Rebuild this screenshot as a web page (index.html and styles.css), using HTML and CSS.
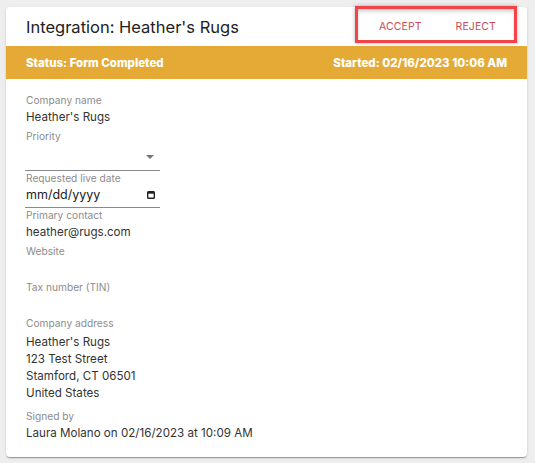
FILE: index.html
```html
<!DOCTYPE html>
<html lang="en">
<head>
    <meta charset="UTF-8">
    <meta name="viewport" content="width=device-width, initial-scale=1.0">
    <title>Integration: Heather's Rugs</title>
    <link rel="stylesheet" href="styles.css">
</head>
<body>
    <div class="card">
        <div class="card-header">
            <h1 class="title">Integration: Heather's Rugs</h1>
            <div class="actions">
                <button class="text-button">ACCEPT</button>
                <button class="text-button">REJECT</button>
            </div>
        </div>
        <div class="highlight"></div>

        <div class="status-bar">
            <span>Status: Form Completed</span>
            <span>Started: 02/16/2023 10:06 AM</span>
        </div>

        <div class="card-body">
            <div class="field">
                <div class="label">Company name</div>
                <div class="value">Heather's Rugs</div>
            </div>
            <div class="field field-input">
                <div class="label">Priority</div>
                <div class="select">
                    <span class="select-arrow"></span>
                </div>
            </div>
            <div class="field field-input">
                <div class="label">Requested live date</div>
                <div class="date-input">
                    <span>mm/dd/yyyy</span>
                    <svg class="calendar" width="8" height="8" viewBox="0 0 8 8">
                        <rect x="0.7" y="0.7" width="6.6" height="6.6" rx="0.8" fill="none" stroke="#222" stroke-width="1.4"/>
                        <rect x="0.7" y="0.7" width="6.6" height="2" fill="#222"/>
                    </svg>
                </div>
            </div>
            <div class="field">
                <div class="label">Primary contact</div>
                <div class="value">heather@rugs.com</div>
            </div>
            <div class="field">
                <div class="label">Website</div>
                <div class="value"></div>
            </div>
            <div class="field">
                <div class="label">Tax number (TIN)</div>
                <div class="value"></div>
            </div>
            <div class="field">
                <div class="label">Company address</div>
                <div class="value address">
                    <div>Heather's Rugs</div>
                    <div>123 Test Street</div>
                    <div>Stamford, CT 06501</div>
                    <div>United States</div>
                </div>
            </div>
            <div class="field">
                <div class="label">Signed by</div>
                <div class="value">Laura Molano on 02/16/2023 at 10:09 AM</div>
            </div>
        </div>
    </div>
</body>
</html>
```

FILE: styles.css
```css
body {
    margin: 0;
    padding: 7px 8px 6px 6px;
    background: #eeeeee;
    font-family: Inter, "Open Sans", sans-serif;
    color: #333;
}
.card {
    position: relative;
    background: #fff;
    border-radius: 4px;
    height: 450px;
    box-shadow: 0 2px 1px -1px rgba(0,0,0,.2), 0 1px 1px 0 rgba(0,0,0,.14), 0 1px 3px 0 rgba(0,0,0,.12);
}
.card-header {
    height: 39px;
    display: flex;
    align-items: center;
    justify-content: space-between;
    padding: 0 20px;
}
.title {
    margin: 0;
    font-size: 16.5px;
    font-weight: 400;
    color: #222;
}
.actions {
    display: flex;
    gap: 24px;
    margin-right: 6px;
}
.text-button {
    background: none;
    border: none;
    font-family: inherit;
    font-size: 10.5px;
    color: #c94a55;
    padding: 6px 5px;
    letter-spacing: 0.1px;
    cursor: pointer;
}
/* red annotation box drawn over the header actions */
.highlight {
    position: absolute;
    left: 349px;
    top: -1px;
    width: 156px;
    height: 31px;
    border: 3px solid #f2434b;
    box-shadow: 0 0 4px rgba(0,0,0,.3), inset 0 3px 4px -1px rgba(0,0,0,.22);
    pointer-events: none;
}
.status-bar {
    height: 33px;
    background: #e5aa36;
    color: #fff;
    font-weight: 800;
    font-size: 11.5px;
    display: flex;
    align-items: center;
    justify-content: space-between;
    padding: 0 20px;
}
.card-body {
    padding: 14px 20px 0;
}
.field {
    margin-bottom: 4px;
}
.field-input {
    margin-bottom: 0;
}
.label {
    font-size: 10.2px;
    line-height: 14px;
    color: #8c8c8c;
}
.value {
    font-size: 11.6px;
    line-height: 16px;
    min-height: 16px;
    padding-top: 2px;
    color: #333;
}
.address {
    line-height: 17px;
    padding: 4px 0 3px;
}
.select {
    position: relative;
    width: 135px;
    height: 27px;
    border-bottom: 1px solid #8a8a8a;
    margin-left: -1px;
}
.select-arrow {
    position: absolute;
    right: 6px;
    top: 12px;
    border-left: 4px solid transparent;
    border-right: 4px solid transparent;
    border-top: 4px solid #757575;
}
.date-input {
    width: 134px;
    height: 20px;
    padding-top: 2px;
    border-bottom: 1px solid #8a8a8a;
    margin-left: -1px;
    padding-left: 1px;
    display: flex;
    align-items: flex-start;
    justify-content: space-between;
    font-size: 12.5px;
    line-height: 16px;
    color: #222;
}
.calendar {
    margin: 4px 5px 0 0;
}
```
